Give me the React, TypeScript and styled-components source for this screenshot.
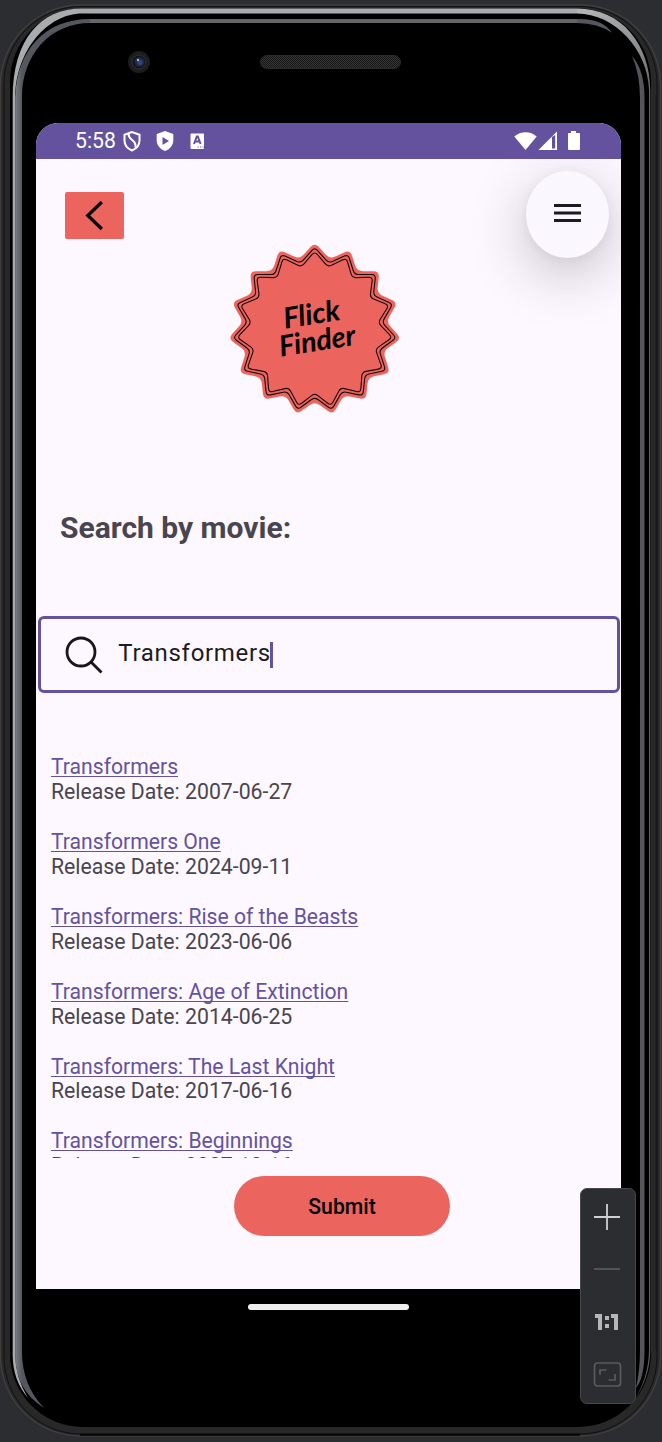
import React from "react";
import styled, { createGlobalStyle } from "styled-components";

const Global = createGlobalStyle`
  * { box-sizing: border-box; }
  body { margin: 0; background: #2b2d30; font-family: Roboto, sans-serif; }
`;

const Stage = styled.main`
  position: relative;
  width: 662px;
  height: 1442px;
  overflow: hidden;
  background: #2b2d30;
  padding: 44px 41px 0 36px;
  isolation: isolate;
`;

const FrameArt = styled.svg`
  position: absolute;
  inset: 0;
  z-index: -1;
`;

const Hardware = styled.div`
  height: 79px;
  display: flex;
  align-items: flex-start;
  padding-left: 91px;
  gap: 109px;
`;

const Earpiece = styled.div`
  width: 141px;
  height: 14px;
  margin-top: 11px;
  border-radius: 7px;
  border: 1px solid #2a2a2a;
  background: repeating-conic-gradient(#161616 0 25%, #353636 0 50%) 0 0 / 2px 2px;
`;

const Screen = styled.section`
  height: 1166px;
  display: flex;
  flex-direction: column;
  background: #fdf8ff;
  border-radius: 22px 22px 0 0;
  overflow: hidden;
`;

const StatusBar = styled.header`
  height: 36px;
  flex: none;
  background: #64529f;
  color: #fff;
  display: flex;
  align-items: center;
  padding: 0 41px 0 39px;
  font-size: 21.2px;
  line-height: 36px;
  position: relative;
  z-index: 1;
  svg { display: block; }
`;

const Time = styled.span`
  width: 40px;
  margin-right: 7px;
  white-space: nowrap;
`;

const Notices = styled.div`
  display: flex;
  align-items: center;
  gap: 14px;
  flex: 1;
`;

const Signals = styled.div`
  display: flex;
  align-items: center;
`;

const TopRow = styled.div`
  display: flex;
  justify-content: space-between;
  padding: 12px 12px 0 29px;
  height: 86px;
`;

const BackButton = styled.button`
  width: 59px;
  height: 47px;
  margin-top: 21px;
  border: 0;
  border-radius: 2px;
  background: #ec645e;
  padding: 0;
`;

const MenuButton = styled.button`
  width: 83px;
  height: 87px;
  flex: none;
  border: 0;
  border-radius: 50%;
  background: #faf7ff;
  padding: 0;
  display: flex;
  align-items: center;
  justify-content: center;
  box-shadow: 0 16px 56px rgba(40, 30, 45, 0.27), 0 2px 12px rgba(40, 30, 45, 0.05);
  svg { margin-top: -3px; }
`;

const LogoSlot = styled.div`
  height: 168px;
  padding-left: 194px;
  svg { display: block; overflow: visible; }
`;

const Heading = styled.h1`
  margin: 95px 0 0 24px;
  font-size: 30px;
  line-height: 40px;
  font-weight: 700;
  color: #49454f;
`;

const SearchField = styled.div`
  margin: 68px 1px 0 2px;
  height: 77px;
  flex: none;
  border: 3px solid #64529f;
  border-radius: 6px;
  display: flex;
  align-items: center;
  padding-left: 23px;
  font-size: 24px;
  letter-spacing: 0.7px;
  color: #1d1b20;
`;

const Query = styled.span`
  margin-left: 14.3px;
  line-height: 28px;
  padding-bottom: 3px;
`;

const Caret = styled.i`
  width: 3px;
  height: 26px;
  background: #64529f;
  margin-left: -1px;
`;

const Results = styled.ul`
  list-style: none;
  margin: 62px 0 0;
  padding: 0.4px 0 0 15px;
  height: 403px;
  flex: none;
  overflow: hidden;
  font-size: 21.26px;
  line-height: 24.9px;
  color: #49454f;
`;

const Result = styled.li`
  height: 74.8px;
`;

const MovieLink = styled.a`
  display: table;
  font-size: 21.15px;
  color: #64529f;
  text-decoration: underline;
  text-decoration-thickness: 1px;
  text-underline-offset: 2px;
  text-decoration-skip-ink: none;
`;

const Submit = styled.button`
  margin: 18px 0 0 198px;
  width: 216px;
  height: 60px;
  flex: none;
  border: 0;
  border-radius: 30px;
  background: #ec645e;
  color: #000;
  font: 500 21.2px/60px Roboto, sans-serif;
  padding: 1px 0 0;
`;

const HomeBar = styled.div`
  width: 161px;
  height: 6px;
  border-radius: 3px;
  background: #f0eff0;
  margin: 15px 0 0 212px;
`;

const ZoomPanel = styled.aside`
  position: absolute;
  left: 580px;
  top: 1188px;
  width: 56px;
  height: 216px;
  border: 1.5px solid #47484b;
  border-radius: 7px;
  background: #2b2d30;
  display: flex;
  flex-direction: column;
  align-items: center;
  padding: 14px 2px 0 0;
  svg { display: block; flex: none; }
`;

const starPath = (cx: number, cy: number, tip: number, valley: number, round: number) => {
  const count = 30;
  const pts = Array.from({ length: count }, (_, i) => {
    const a = (i * Math.PI) / 15 - Math.PI / 2;
    const r = i % 2 ? valley : tip;
    return [cx + r * Math.cos(a), cy + r * Math.sin(a)];
  });
  const toward = (a: number[], b: number[]) => {
    const len = Math.hypot(b[0] - a[0], b[1] - a[1]);
    return `${(a[0] + ((b[0] - a[0]) * round) / len).toFixed(2)} ${(a[1] + ((b[1] - a[1]) * round) / len).toFixed(2)}`;
  };
  return (
    pts
      .map((p, i) => {
        const prev = pts[(i + count - 1) % count];
        const next = pts[(i + 1) % count];
        return `${i ? "L" : "M"}${toward(p, prev)}Q${p[0].toFixed(2)} ${p[1].toFixed(2)} ${toward(p, next)}`;
      })
      .join("") + "Z"
  );
};

const Logo = () => (
  <svg width="170" height="168" viewBox="0 0 170 168">
    <path d={starPath(84.7, 84.4, 87, 72, 6)} fill="#ec645e" />
    <path d={starPath(84.7, 84.4, 82, 67.8, 4)} fill="none" stroke="#17090a" strokeWidth="1.1" />
    <path d={starPath(84.7, 84.4, 78, 63.8, 4)} fill="none" stroke="#17090a" strokeWidth="1.1" />
    <g transform="rotate(-9 85 85)" fontFamily="Lato, sans-serif" fontStyle="italic" fontWeight="700" fontSize="29" fill="#000">
      <text x="55.500" y="79" textLength="57" lengthAdjust="spacingAndGlyphs">Flick</text>
      <text x="47" y="106" textLength="77" lengthAdjust="spacingAndGlyphs">Finder</text>
    </g>
  </svg>
);

const PhoneFrame = () => (
  <FrameArt width="662" height="1442" viewBox="0 0 662 1442" fill="none">
    <defs>
      <linearGradient id="rightRim" gradientUnits="userSpaceOnUse" x1="577" y1="10" x2="650" y2="100">
        <stop offset="0" stopColor="#b4b7b9" />
        <stop offset="0.6" stopColor="#8b8c8e" />
        <stop offset="1" stopColor="#5c5c5c" />
      </linearGradient>
      <linearGradient id="leftGlow" gradientUnits="userSpaceOnUse" x1="15" y1="0" x2="22" y2="0">
        <stop offset="0" stopColor="#7b7e84" />
        <stop offset="1" stopColor="#55575f" />
      </linearGradient>
    </defs>
    <rect x="0.500" y="5" width="660" height="1431" rx="80" fill="#292828" stroke="#403e3e" strokeWidth="1.500" />
    <rect x="4" y="6.500" width="653" height="1427.500" rx="77" stroke="#111" strokeWidth="1" />
    <path d="M80 1434.700H580" stroke="#050505" strokeWidth="2" />
    <rect x="10" y="8.500" width="641" height="1418.500" rx="73" fill="#000" />
    <path d="M12.700 1355V98C12.700 40 40 8.500 82 8.500H577V13.500H82C48 13.500 15.500 50 15.200 98V1355Q15.500 1378 28 1398Q12.700 1380 12.700 1355Z" fill="#a9acaf" />
    <path d="M577 8.500C622 8.500 650 45 650.300 90V1350Q650 1378 634 1400Q648.500 1378 649 1350V90C648 50 615 13.500 577 13.500Z" fill="url(#rightRim)" />
    <path d="M15.200 1355V97C17 50 45 19 90 19H580Q603 19 612 33Q598 23 577 23H90C50 23 22 55 22 97V1352Q22 1385 44 1408Q15.200 1390 15.200 1355Z" fill="url(#leftGlow)" />
    <path d="M90 21H577" stroke="#66656a" strokeWidth="4" />
    <path d="M632 56Q644.500 70 644.500 98V1350Q644.500 1378 636 1388Q640 1370 640 1350V98Q640 74 632 56Z" fill="#55555c" />
    <path d="M656 95V1350" stroke="#191919" strokeWidth="1" />
  </FrameArt>
);

const movies = [
  ["Transformers", "2007-06-27"],
  ["Transformers One", "2024-09-11"],
  ["Transformers: Rise of the Beasts", "2023-06-06"],
  ["Transformers: Age of Extinction", "2014-06-25"],
  ["Transformers: The Last Knight", "2017-06-16"],
  ["Transformers: Beginnings", "2007-10-16"],
];

export default function App() {
  return (
    <>
      <Global />
      <Stage>
        <PhoneFrame />
        <Hardware>
          <svg width="24" height="36" viewBox="0 0 24 36">
            <circle cx="12" cy="18" r="11" fill="#1d1d1e" />
            <circle cx="12" cy="18" r="7" fill="#11131b" stroke="#343438" />
            <circle cx="12.500" cy="18" r="5" fill="#20294b" />
            <circle cx="13" cy="18.500" r="2.500" fill="#33447a" />
            <circle cx="11" cy="16" r="1.200" fill="#a5b7da" />
          </svg>
          <Earpiece />
        </Hardware>
        <Screen>
          <StatusBar>
            <Time>5:58</Time>
            <Notices>
              <svg width="20" height="22" viewBox="0 0 20 22" fill="none" stroke="#fff" strokeWidth="2">
                <path d="M10 2L2.500 4.800V10.500C2.500 15 5.600 18.700 10 20.500C14.400 18.700 17.500 15 17.500 10.500V4.800Z" />
                <path d="M6.500 3.500C6.500 10.500 13.500 9.500 13.500 15.500V17.500" />
              </svg>
              <svg width="18" height="22" viewBox="0 0 18 22">
                <path d="M9 1L.7 4V10.500C.7 15.500 4.500 19.500 9 21C13.500 19.500 17.300 15.500 17.300 10.500V4Z" fill="#fff" />
                <path d="M6.500 7V15L13 11Z" fill="#64529f" />
              </svg>
              <svg width="18" height="22" viewBox="0 0 18 22">
                <rect x="2.500" y="3.500" width="13.500" height="15.500" rx="1" fill="#fff" />
                <path d="M6 14L8.800 6.500H9.800L12.600 14M7.300 11.500H11.500" stroke="#64529f" strokeWidth="2" fill="none" />
                <path d="M9.500 17h1.200M12 17h1.200M14.500 17h1" stroke="#64529f" />
              </svg>
            </Notices>
            <Signals>
              <svg width="66" height="22" viewBox="0 0 66 22" fill="#fff">
                <path d="M11.500 20L.3 6.500C6.500.8 16.500.8 22.700 6.500Z" />
                <path d="M24.500 20L43 1.500V20ZM38 7V18.500H41.200V5Z" fillRule="evenodd" />
                <path d="M57 1h5v2h3q1 0 1 1v15q0 1-1 1H55q-1 0-1-1V4q0-1 1-1h2Z" />
              </svg>
            </Signals>
          </StatusBar>
          <TopRow>
            <BackButton aria-label="Back">
              <svg width="59" height="47" viewBox="0 0 59 47" fill="none">
                <path d="M36.800 10L22.800 23.500L36.800 37" stroke="#000" strokeWidth="3.300" />
              </svg>
            </BackButton>
            <MenuButton aria-label="Menu">
              <svg width="28" height="20" viewBox="0 0 28 20">
                <path d="M0 2.500h27M0 10h27M0 17.500h27" stroke="#1b1b20" strokeWidth="2.800" />
              </svg>
            </MenuButton>
          </TopRow>
          <LogoSlot><Logo /></LogoSlot>
          <Heading>Search by movie:</Heading>
          <SearchField>
            <svg width="40" height="40" viewBox="0 0 40 40" fill="none" stroke="#171717" strokeWidth="2.800">
              <circle cx="17" cy="17" r="14" />
              <path d="M27 27L37.500 37.500" />
            </svg>
            <Query>Transformers</Query>
            <Caret />
          </SearchField>
          <Results>
            {movies.map(([title, date]) => (
              <Result key={title}>
                <MovieLink>{title}</MovieLink>
                Release Date: {date}
              </Result>
            ))}
          </Results>
          <Submit>Submit</Submit>
        </Screen>
        <HomeBar />
        <ZoomPanel>
          <svg width="28" height="28" viewBox="0 0 28 28" stroke="#ced0d6" strokeWidth="1.800">
            <path d="M1 14h26M14 1v26" />
          </svg>
          <svg width="28" height="82" viewBox="0 0 28 82" stroke="#5a5b5b" strokeWidth="1.700">
            <path d="M1 38h26" />
          </svg>
          <svg width="24" height="18" viewBox="0 0 24 18" fill="#b5b6b8">
            <path d="M0 1h7v16H3V5H0ZM10 3h4v4h-4ZM10 11h4v4h-4ZM16 1h7v16H19V5H16Z" />
          </svg>
          <svg width="30" height="64" viewBox="0 0 30 64" fill="none" stroke="#5a5b5b" strokeWidth="1.700">
            <rect x="2.500" y="32" width="26" height="23" rx="3" />
            <path d="M8 44V39H14.500M16.500 49H23V43" />
          </svg>
        </ZoomPanel>
      </Stage>
    </>
  );
}
